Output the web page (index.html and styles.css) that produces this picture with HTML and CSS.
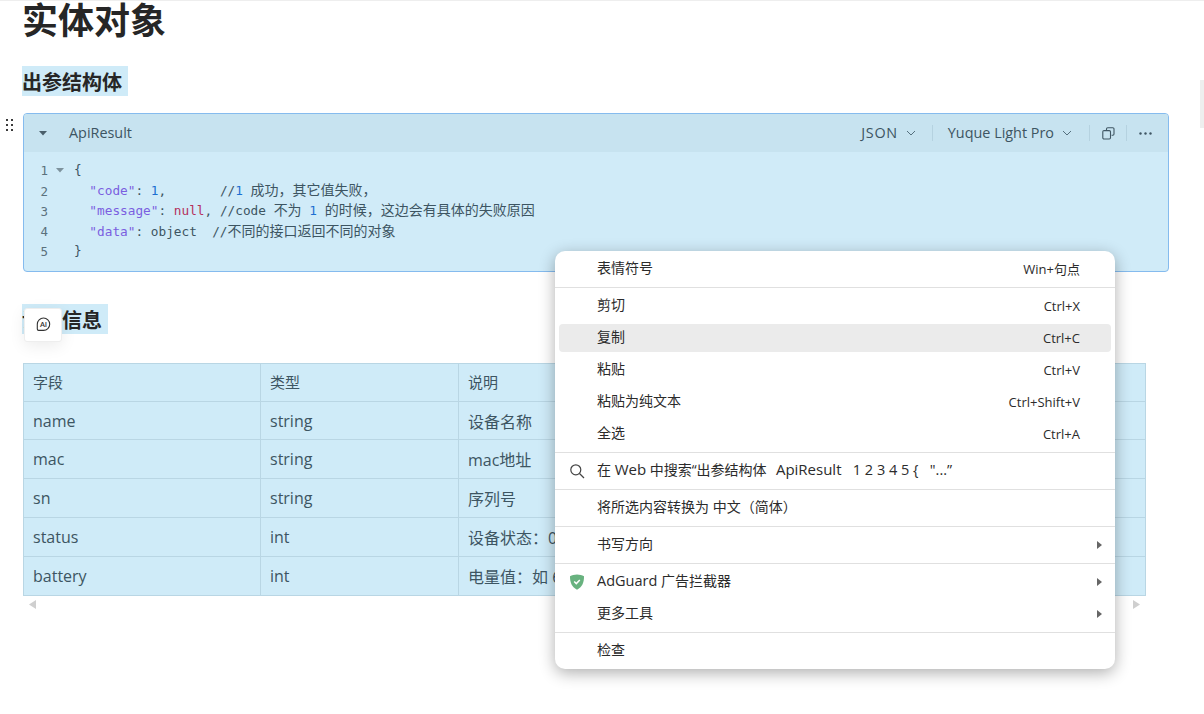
FILE: index.html
```html
<!DOCTYPE html>
<html lang="zh-CN">
<head>
<meta charset="utf-8">
<title>实体对象</title>
<link rel="stylesheet" href="styles.css">
</head>
<body>
<div class="scroll-thumb"></div>
<main class="doc">
  <h1 class="title">实体对象</h1>
  <h2 class="heading first"><span class="sel">出参结构体&nbsp;</span></h2>

  <section class="code-card">
    <svg class="drag" width="8" height="12" viewBox="0 0 8 12"><g fill="#3b3b3b"><rect x="0" y="0" width="2" height="2"/><rect x="5" y="0" width="2" height="2"/><rect x="0" y="5" width="2" height="2"/><rect x="5" y="5" width="2" height="2"/><rect x="0" y="10" width="2" height="2"/><rect x="5" y="10" width="2" height="2"/></g></svg>
    <header class="code-head">
      <svg class="caret" width="8" height="5" viewBox="0 0 8 5"><path d="M0 0h8L4 4.5z" fill="#4a5f6b"/></svg>
      <span class="code-name">ApiResult</span>
      <div class="code-tools">
        <span class="tool"><span class="json">JSON</span><svg class="chev" width="10" height="6" viewBox="0 0 10 6"><path d="M1 1l4 4 4-4" fill="none" stroke="#55707e" stroke-width="1"/></svg></span>
        <i class="vline"></i>
        <span class="tool">Yuque Light Pro<svg class="chev" width="10" height="6" viewBox="0 0 10 6"><path d="M1 1l4 4 4-4" fill="none" stroke="#55707e" stroke-width="1"/></svg></span>
        <i class="vline"></i>
        <svg class="ico" width="13" height="13" viewBox="0 0 13 13"><path d="M4.500 3V2a1.200 1.200 0 0 1 1.200-1.200h5.100A1.200 1.200 0 0 1 12 2v5.100a1.200 1.200 0 0 1-1.200 1.200H9.600M2 3.600h5.300a1.200 1.200 0 0 1 1.200 1.200v6a1.200 1.200 0 0 1-1.200 1.200H2a1.200 1.200 0 0 1-1.200-1.200v-6A1.200 1.200 0 0 1 2 3.600z" fill="none" stroke="#3f5663" stroke-width="1.100"/></svg>
        <i class="vline"></i>
        <svg class="ico" width="13" height="3" viewBox="0 0 13 3"><g fill="#3f5663"><circle cx="1.500" cy="1.500" r="1.200"/><circle cx="6.500" cy="1.500" r="1.200"/><circle cx="11.500" cy="1.500" r="1.200"/></g></svg>
      </div>
    </header>
    <div class="code-body">
      <div class="line"><span class="ln">1</span><svg class="fold" width="8" height="5" viewBox="0 0 8 5"><path d="M0 0h8L4 4.500z" fill="#7d929d"/></svg><code>{</code></div>
      <div class="line"><span class="ln">2</span><span class="nofold"></span><code>  <b class="str">"code"</b>: <b class="num">1</b>,       //<b class="num">1</b> <span class="zh">成功，其它值失败，</span></code></div>
      <div class="line"><span class="ln">3</span><span class="nofold"></span><code>  <b class="str">"message"</b>: <b class="nul">null</b>, //code <span class="zh">不为</span> <b class="num">1</b> <span class="zh">的时候，这边会有具体的失败原因</span></code></div>
      <div class="line"><span class="ln">4</span><span class="nofold"></span><code>  <b class="str">"data"</b>: object  //<span class="zh">不同的接口返回不同的对象</span></code></div>
      <div class="line"><span class="ln">5</span><span class="nofold"></span><code>}</code></div>
    </div>
  </section>

  <h2 class="heading second"><span class="sel">设备信息&nbsp;</span></h2>
  <button class="ai-chip" type="button" aria-label="AI">
    <svg width="15" height="15" viewBox="0 0 15 15"><path d="M7.500 1a6.200 6.200 0 0 1 6.200 6.200v0a6.200 6.200 0 0 1-6.200 6.200H2.600a1.300 1.300 0 0 1-1.300-1.300V7.200A6.200 6.200 0 0 1 7.500 1z" fill="none" stroke="#333" stroke-width="1.100"/><text x="7.500" y="10" text-anchor="middle" class="ai-text">AI</text></svg>
  </button>

  <table class="fields">
    <colgroup><col class="c1"><col class="c2"><col class="c3"></colgroup>
    <tr class="hd"><td>字段</td><td>类型</td><td>说明</td></tr>
    <tr class="short"><td>name</td><td>string</td><td>设备名称</td></tr>
    <tr><td>mac</td><td>string</td><td>mac地址</td></tr>
    <tr><td>sn</td><td>string</td><td>序列号</td></tr>
    <tr><td>status</td><td>int</td><td>设备状态：0 离线，1 在线</td></tr>
    <tr><td>battery</td><td>int</td><td>电量值：如 60</td></tr>
  </table>
  <div class="hscroll">
    <svg width="7" height="9" viewBox="0 0 7 9"><path d="M7 0v9L0 4.500z" fill="#cfcfcf"/></svg>
    <svg width="7" height="9" viewBox="0 0 7 9"><path d="M0 0v9l7-4.500z" fill="#cfcfcf"/></svg>
  </div>
</main>

<nav class="menu">
  <div class="item"><span class="label">表情符号</span><span class="key">Win+句点</span></div>
  <hr>
  <div class="item"><span class="label">剪切</span><span class="key">Ctrl+X</span></div>
  <div class="item active"><span class="label">复制</span><span class="key">Ctrl+C</span></div>
  <div class="item"><span class="label">粘贴</span><span class="key">Ctrl+V</span></div>
  <div class="item"><span class="label">粘贴为纯文本</span><span class="key">Ctrl+Shift+V</span></div>
  <div class="item"><span class="label">全选</span><span class="key">Ctrl+A</span></div>
  <hr>
  <div class="item"><svg class="lead" width="16" height="16" viewBox="0 0 16 16"><circle cx="6.800" cy="6.800" r="5" fill="none" stroke="#444" stroke-width="1.200"/><path d="M10.500 10.500l4.500 4.500" stroke="#444" stroke-width="1.200"/></svg><span class="label">在 <span class="lat">Web</span> 中搜索“出参结构体&nbsp; <span class="lat api">ApiResult</span><span class="lat tail">&nbsp; &nbsp;1 2 3 4 5 {&nbsp; &nbsp;"...”</span></span></div>
  <hr>
  <div class="item"><span class="label">将所选内容转换为 中文（简体）</span></div>
  <hr>
  <div class="item"><span class="label">书写方向</span><i class="arrow"></i></div>
  <hr>
  <div class="item"><svg class="lead" width="16" height="16" viewBox="0 0 16 16"><path d="M8 0.500c2.600 0 5 .7 7 1.800 0 6-1.500 10.500-7 13.500C2.500 12.800 1 8.300 1 2.300 3 1.200 5.400.5 8 .5z" fill="#68b27f"/><path d="M5.200 7.500l2.100 2.100 3.500-3.600" fill="none" stroke="#fff" stroke-width="1.500"/></svg><span class="label"><span class="lat ad">AdGuard</span> 广告拦截器</span><i class="arrow"></i></div>
  <div class="item"><span class="label">更多工具</span><i class="arrow"></i></div>
  <hr>
  <div class="item"><span class="label">检查</span></div>
</nav>
</body>
</html>
```
FILE: styles.css
```css
* { box-sizing: border-box; }
html, body { margin: 0; padding: 0; height: 100%; overflow: hidden; }
body {
  background: #fff;
  border-top: 1px solid #eeeeee;
  font-family: "Open Sans", "Noto Sans CJK SC", sans-serif;
  color: #262626;
}
.scroll-thumb { position: absolute; right: 0; top: 80px; width: 4px; height: 48px; background: #eeeeee; }
.doc { position: relative; padding-left: 23px; }
.title { margin: 0 0 0 -1px; font-size: 36px; line-height: 39px; font-weight: 700; height: 39px; }
.heading { margin: 0; font-size: 20px; font-weight: 700; height: 30px; line-height: 34px; }
.heading.first { margin-top: 26px; }
.heading.second { margin-top: 32px; }
.sel { display: inline-block; height: 30px; margin-left: -1px; padding-right: 1px; background: #cfebf8; vertical-align: top; }

.code-card {
  position: relative;
  width: 1146px; height: 159px; margin-top: 17px;
  background: #d0ebf8;
  border: 1px solid #85bbee; border-radius: 4px;
}
.drag { position: absolute; left: -18px; top: 5px; }
.code-head {
  display: flex; align-items: center;
  height: 38px; background: #c7e3f0; border-radius: 3px 3px 0 0;
  padding-left: 15px; padding-right: 16px;
  color: #3d5562; font-size: 14.4px;
}
.caret { margin-right: 22px; }
.code-name { line-height: 38px; }
.code-tools { margin-left: auto; display: flex; align-items: center; }
.tool { display: inline-flex; align-items: center; line-height: 20px; }
.json { letter-spacing: .7px; }
.chev { margin-left: 8px; }
.vline { display: block; width: 1px; height: 16px; background: #b5d2e0; margin: 0 15px 0 16px; }
.tool + .vline + .tool + .vline { margin: 0 12px 0 17px; }
.ico + .vline { margin: 0 12px 0 11px; }

.code-body { padding-top: 8.2px; }
.line { display: flex; align-items: center; height: 20.25px; color: #3d5562; }
.ln { width: 24px; text-align: right; color: #5b717d; font-family: "DejaVu Sans Mono", monospace; font-size: 12.5px; padding-top: 1px; }
.fold, .nofold { width: 8px; margin-left: 8px; margin-right: 10px; flex: none; }
.line code { font-family: "DejaVu Sans Mono", "Noto Sans CJK SC", monospace; font-size: 12.75px; white-space: pre; line-height: 20px; }
.line .zh { font-family: "Noto Sans CJK SC", sans-serif; font-size: 14px; line-height: 18px; }
.line b { font-weight: 400; }
.str { color: #7b5fe0; }
.num { color: #1c6fd1; }
.nul { color: #b5305c; }

.ai-chip {
  position: absolute; left: 24px; top: 307px;
  width: 38px; height: 34px; padding: 0 0 2px;
  display: flex; align-items: center; justify-content: center;
  background: #fff; border: 1px solid #eeeeee; border-radius: 3px;
  box-shadow: 0 4px 16px rgba(0, 0, 0, .08);
}
.ai-text { font-family: "Open Sans", sans-serif; font-size: 7.500px; font-weight: 600; fill: #333; }

.fields {
  width: 1123px; margin-top: 29px;
  table-layout: fixed; border-collapse: collapse;
  background: #cfebf8; color: #3d5562;
}
.c1 { width: 237px; }
.c2 { width: 198px; }
.fields td {
  border: 1px solid #b9d6e4; padding: 0 9px; height: 39px;
  font-size: 16px; white-space: nowrap;
}
.fields .hd td { font-size: 15px; height: 38px; padding-bottom: 2px; }
.fields .short td { height: 38px; }

.hscroll { width: 1123px; display: flex; justify-content: space-between; padding: 4px 6px 0; }

.menu {
  position: absolute; left: 555px; top: 251px;
  width: 560px; height: 418px; padding: 1px 0 3px;
  background: #fff; border-radius: 10px;
  box-shadow: 0 4px 16px rgba(0, 0, 0, .32);
  font-size: 14px; color: #2b2b2b;
}
.menu hr { margin: 3px 0 1px; height: 1px; border: 0; background: #e0e0e0; }
.item { position: relative; display: flex; align-items: center; height: 32px; padding: 0 35px 2px 42px; }
.item.active::before {
  content: ""; position: absolute; z-index: 0;
  left: 4px; right: 4px; top: 3px; bottom: 1px;
  background: #ebebeb; border-radius: 4px;
}
.label, .key { position: relative; white-space: pre; }
.lat { font-size: 15px; }
.lat.ad { font-size: 14.5px; }
.lat.api { margin-left: 2px; }
.lat.tail { font-size: 14.5px; }
.key { margin-left: auto; font-size: 13px; line-height: 16px; padding-top: 4px; }
.lead { position: absolute; left: 14px; top: 9px; }
.arrow {
  position: absolute; right: 13px; top: 13px; width: 0; height: 0;
  border-left: 5px solid #666; border-top: 4px solid transparent; border-bottom: 4px solid transparent;
}
```
